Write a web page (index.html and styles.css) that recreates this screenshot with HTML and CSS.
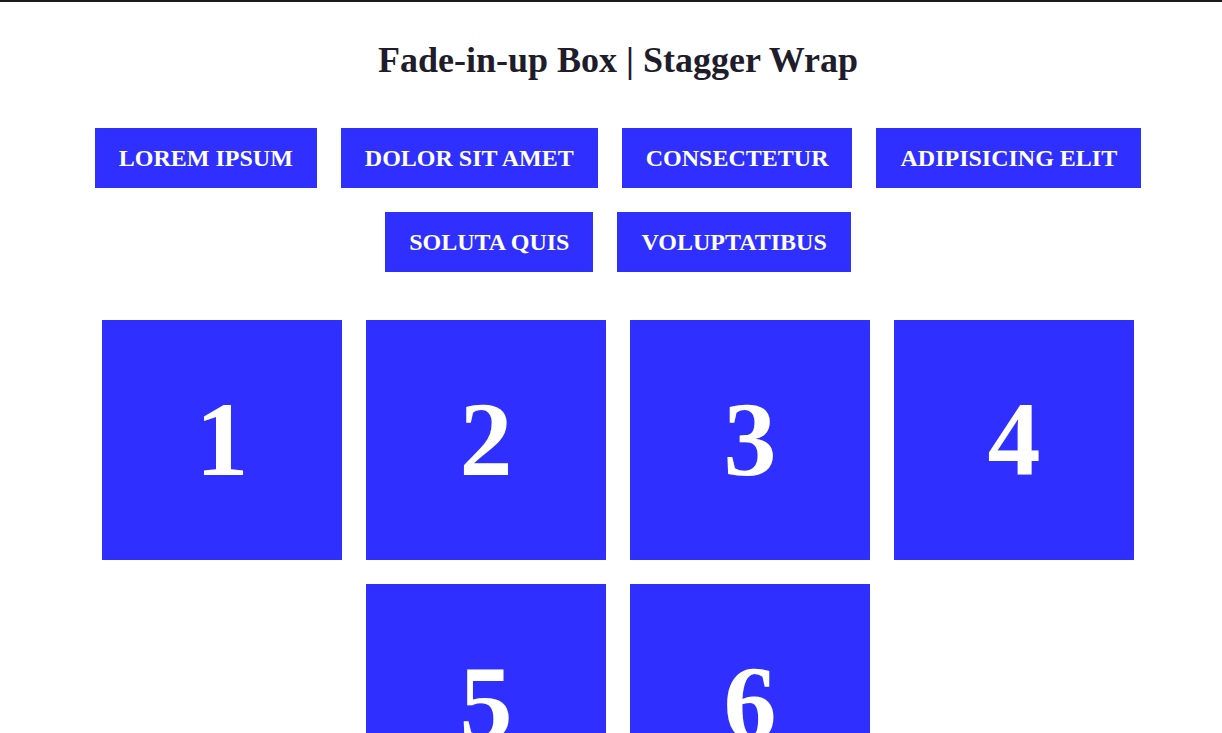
FILE: index.html
```html
<!DOCTYPE html>
<html lang="en">
<head>
<meta charset="utf-8">
<title>Fade-in-up Box | Stagger Wrap</title>
<link rel="stylesheet" href="styles.css">
</head>
<body>
<main class="page">
  <h1 class="title">Fade-in-up Box | Stagger Wrap</h1>
  <nav class="tags">
    <a class="tag">LOREM IPSUM</a>
    <a class="tag">DOLOR SIT AMET</a>
    <a class="tag">CONSECTETUR</a>
    <a class="tag">ADIPISICING ELIT</a>
    <a class="tag">SOLUTA QUIS</a>
    <a class="tag">VOLUPTATIBUS</a>
  </nav>
  <section class="boxes">
    <div class="box">1</div>
    <div class="box">2</div>
    <div class="box">3</div>
    <div class="box">4</div>
    <div class="box">5</div>
    <div class="box">6</div>
  </section>
</main>
</body>
</html>
```
FILE: styles.css
```css
html, body {
  margin: 0;
  padding: 0;
  background: #ffffff;
}

body {
  font-family: "Liberation Serif", "Times New Roman", serif;
  color: #1f1d2b;
  border-top: 2px solid #1a1a1a;
  overflow: hidden;
}

.page {
  padding: 0 0 0 14px;
  display: flex;
  flex-direction: column;
  align-items: stretch;
}

.title {
  margin: 38px 0 47px;
  font-size: 36px;
  font-weight: bold;
  line-height: 41px;
  text-align: center;
  color: #1f1d2b;
}

.tags {
  display: flex;
  flex-wrap: wrap;
  justify-content: center;
  gap: 24px;
}

.tag {
  display: block;
  height: 60px;
  line-height: 60px;
  padding: 0 24px;
  background: #2f2fff;
  color: #ffffff;
  font-size: 24px;
  font-weight: bold;
  white-space: nowrap;
}

.boxes {
  margin-top: 48px;
  display: flex;
  flex-wrap: wrap;
  justify-content: center;
  gap: 24px;
}

.box {
  width: 240px;
  height: 240px;
  background: #2f2fff;
  color: #ffffff;
  font-size: 106px;
  font-weight: bold;
  display: flex;
  align-items: center;
  justify-content: center;
}
```
